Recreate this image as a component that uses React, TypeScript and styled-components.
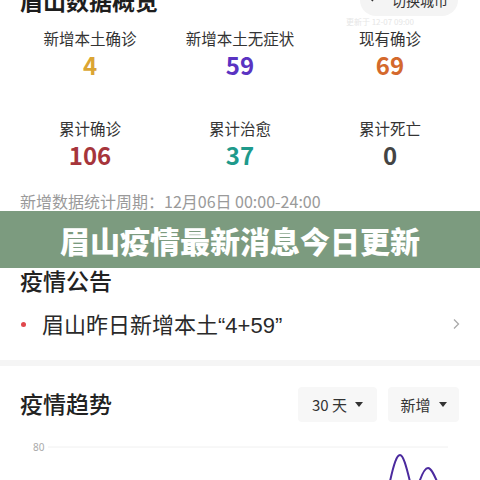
import React from "react";
import styled, { createGlobalStyle } from "styled-components";

const Global = createGlobalStyle`
  html, body { margin: 0; padding: 0; background: #ffffff; }
  body { font-family: "Noto Sans CJK SC", "Noto Sans", sans-serif; overflow: hidden; }
`;

const Page = styled.div`
  position: relative;
  width: 480px;
  height: 480px;
  overflow: hidden;
  background: #fff;
`;

const Header = styled.div`
  display: flex;
  align-items: center;
  justify-content: space-between;
  height: 32px;
  margin-top: -16px;
  padding: 0 22px 0 20px;
`;

const PageTitle = styled.div`
  font-size: 23px;
  font-weight: 700;
  line-height: 32px;
  color: #1e1e1e;
`;

const SwitchBtn = styled.div`
  display: flex;
  align-items: center;
  gap: 10px;
  height: 32px;
  padding: 0 10px 0 8px;
  border-radius: 16px;
  background: #f4f4f4;
  font-size: 14px;
  color: #333;
`;

const UpdateNote = styled.div`
  display: flex;
  justify-content: flex-end;
  padding-right: 66px;
  font-size: 8px;
  line-height: 12px;
  color: #e6e6e6;
`;

const StatsGrid = styled.div`
  display: grid;
  grid-template-columns: repeat(3, 1fr);
  row-gap: 38px;
  padding: 0 15px;
`;

const Stat = styled.div`
  display: flex;
  flex-direction: column;
  align-items: center;
  gap: 2px;
`;

const StatLabel = styled.div`
  font-size: 15.5px;
  line-height: 20px;
  color: #333;
`;

const StatValue = styled.div<{ $color: string }>`
  font-size: 24px;
  font-weight: 700;
  line-height: 30px;
  color: ${(p) => p.$color};
`;

const Period = styled.div`
  margin-top: 21px;
  padding: 0 20px;
  font-size: 16px;
  line-height: 20px;
  color: #9a9a9a;
`;

const Banner = styled.div`
  position: absolute;
  left: 0;
  top: 211px;
  width: 480px;
  height: 57px;
  background: #7c9b7f;
  display: flex;
  align-items: center;
  justify-content: center;
  color: #fff;
  font-size: 30px;
  font-weight: 900;
`;

const SectionTitle = styled.div<{ $mt: number }>`
  margin-top: ${(p) => p.$mt}px;
  padding: 0 20px;
  font-size: 23px;
  font-weight: 500;
  line-height: 32px;
  color: #222;
`;

const NoticeRow = styled.div`
  display: flex;
  align-items: center;
  margin-top: 14px;
  padding: 0 20px 0 21px;
  height: 28px;
`;

const Dot = styled.span`
  width: 5px;
  height: 5px;
  border-radius: 50%;
  background: #e0474c;
  margin-right: 16px;
`;

const NoticeText = styled.span`
  flex: 1;
  font-size: 22px;
  line-height: 28px;
  color: #2a2a2a;
`;

const Quote = styled.span`
  font-family: "Liberation Sans", "Noto Sans", sans-serif;
`;

const Divider = styled.div`
  margin-top: 22px;
  height: 6px;
  background: #f5f5f5;
`;

const TrendHeader = styled.div`
  display: flex;
  align-items: center;
  margin-top: 21px;
  padding: 0 21px 0 20px;
  height: 35px;
`;

const TrendTitle = styled.div`
  flex: 1;
  font-size: 23px;
  font-weight: 500;
  line-height: 32px;
  color: #222;
  margin-top: -3px;
`;

const Select = styled.div<{ $w: number }>`
  display: flex;
  align-items: center;
  justify-content: center;
  gap: 8px;
  width: ${(p) => p.$w}px;
  height: 35px;
  margin-left: 11px;
  border-radius: 4px;
  background: #f7f7f7;
  font-size: 15px;
  color: #333;
`;

const Caret = styled.span`
  width: 0;
  height: 0;
  border-left: 4px solid transparent;
  border-right: 4px solid transparent;
  border-top: 5px solid #333;
`;

const Chart = styled.svg`
  display: block;
  margin-top: 8px;
`;

const stats = [
  { label: "新增本土确诊", value: "4", color: "#dba533" },
  { label: "新增本土无症状", value: "59", color: "#5a33c2" },
  { label: "现有确诊", value: "69", color: "#d4692c" },
  { label: "累计确诊", value: "106", color: "#a6353b" },
  { label: "累计治愈", value: "37", color: "#1e9a8b" },
  { label: "累计死亡", value: "0", color: "#444444" },
];

export default function App() {
  return (
    <Page>
      <Global />
      <Header>
        <PageTitle>眉山数据概览</PageTitle>
        <SwitchBtn>
          <svg width="14" height="12" viewBox="0 0 14 12" fill="none" stroke="#333" strokeWidth="1.5">
            <path d="M13 4H2M5 1L2 4L5 7" />
          </svg>
          切换城市
        </SwitchBtn>
      </Header>
      <UpdateNote>更新于 12-07 09:00</UpdateNote>
      <StatsGrid>
        {stats.map((s) => (
          <Stat key={s.label}>
            <StatLabel>{s.label}</StatLabel>
            <StatValue $color={s.color}>{s.value}</StatValue>
          </Stat>
        ))}
      </StatsGrid>
      <Period>新增数据统计周期：12月06日 00:00-24:00</Period>
      <SectionTitle $mt={53}>疫情公告</SectionTitle>
      <NoticeRow>
        <Dot />
        <NoticeText>
          眉山昨日新增本土<Quote>“4+59”</Quote>
        </NoticeText>
        <svg width="8" height="12" viewBox="0 0 8 12" fill="none" stroke="#aaa" strokeWidth="1.3">
          <path d="M2 1.5L6.5 6L2 10.5" />
        </svg>
      </NoticeRow>
      <Divider />
      <TrendHeader>
        <TrendTitle>疫情趋势</TrendTitle>
        <Select $w={79}>
          30 天 <Caret />
        </Select>
        <Select $w={71}>
          新增 <Caret />
        </Select>
      </TrendHeader>
      <Chart width="480" height="50" viewBox="0 0 480 50">
        <text x="33" y="21" fontSize="10" fill="#aaa" fontFamily="Noto Sans, sans-serif">80</text>
        <line x1="48" y1="17" x2="448" y2="17" stroke="#f0f0f0" strokeWidth="1" />
        <path
          d="M389,56 C394,32 397,25 400,25 C403,25 406,34 411,56 M418,56 C422,43 425,38 428,38 C431,38 434,44 439,56"
          fill="none"
          stroke="#4b2a9e"
          strokeWidth="2"
        />
      </Chart>
      <Banner>眉山疫情最新消息今日更新</Banner>
    </Page>
  );
}
